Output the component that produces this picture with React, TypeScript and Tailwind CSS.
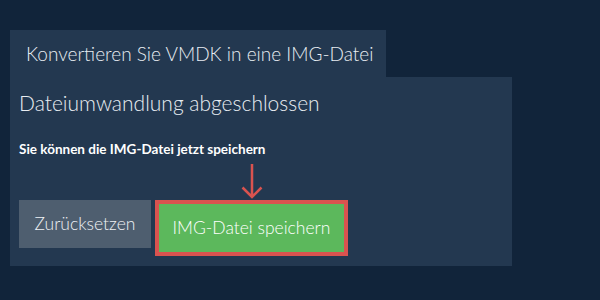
const light = { fontFamily: "'Lato Light', Lato, sans-serif", fontWeight: 300 };

export default function App() {
  return (
    <div
      className="w-[600px] h-[300px] bg-[#11243a] pt-[30px] px-[10px]"
      style={{ fontFamily: "Lato, 'Open Sans', sans-serif" }}
    >
      <div className="w-[376px] h-[47px] bg-[#233850] flex items-center pl-4">
        <span className="text-[19px] text-[#e8edf2] leading-none whitespace-nowrap" style={light}>
          Konvertieren Sie VMDK in eine IMG-Datei
        </span>
      </div>
      <div className="w-[502px] h-[189px] bg-[#233850] pl-[9px] pt-[11px]">
        <h2 className="text-[21px] text-[#e8edf2] leading-[30px] whitespace-nowrap" style={light}>
          Dateiumwandlung abgeschlossen
        </h2>
        <p className="mt-[22px] text-[13.5px] font-bold text-white leading-[18px]">
          Sie können die IMG-Datei jetzt speichern
        </p>
        <div className="flex">
          <div className="w-[132px]" />
          <div className="w-[193px] ml-[4px] flex justify-center pt-[6px] h-[42px]">
            <svg width="24" height="35" viewBox="0 0 24 35" fill="none">
              <path d="M12 0V33M2.5 23.5l9.5 9.5 9.5-9.5" stroke="#d9534f" strokeWidth="2.5" />
            </svg>
          </div>
        </div>
        <div className="flex items-start gap-[4px]">
          <button className="w-[132px] h-[48px] bg-[#4e5e6f] text-[17.5px] text-[#eef2f5] whitespace-nowrap" style={light}>
            Zurücksetzen
          </button>
          <button className="w-[193px] h-[56px] border-[4px] border-[#d9534f] bg-[#5cb85c] text-[17.5px] text-white whitespace-nowrap" style={light}>
            IMG-Datei speichern
          </button>
        </div>
      </div>
    </div>
  );
}
